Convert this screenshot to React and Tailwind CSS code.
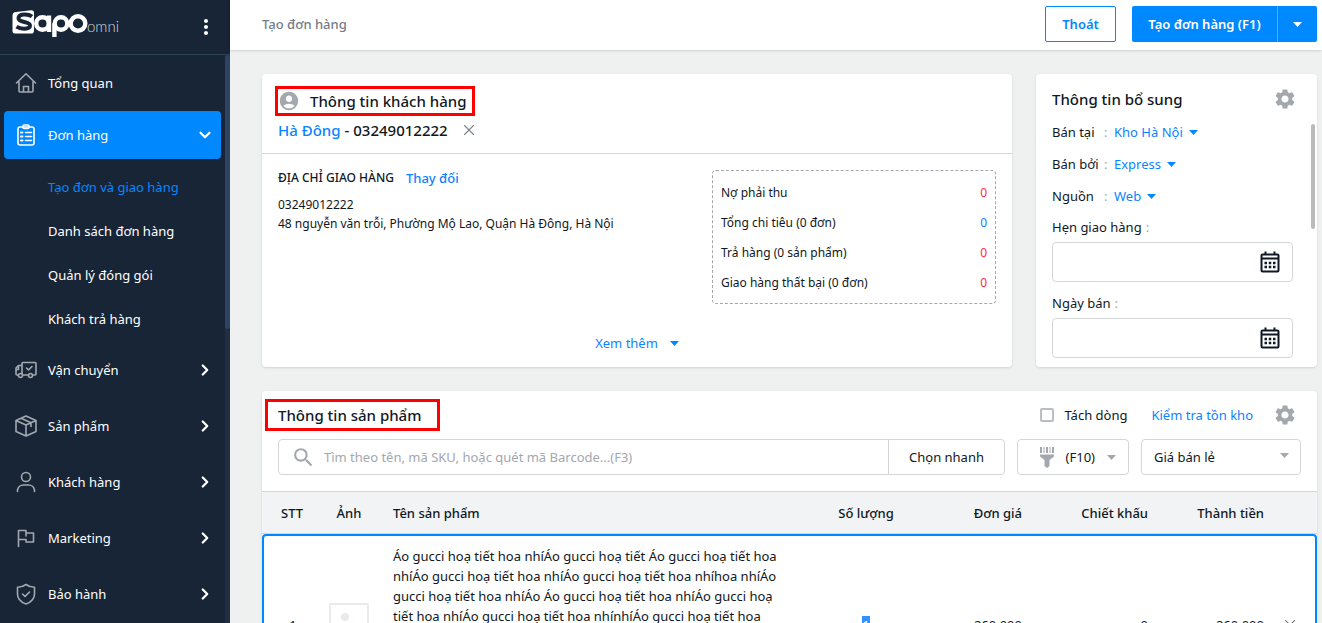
import React, { useState } from 'react';
import { ChevronDown, ChevronRight, X } from 'lucide-react';
import { MdSettings, MdAccountCircle, MdSearch, MdMoreVert } from 'react-icons/md';

const MenuIcon = ({ children }) => (
  <svg width="22" height="22" viewBox="0 0 22 22" fill="none" stroke="currentColor" strokeWidth="1.6" strokeLinejoin="round" strokeLinecap="round" className="shrink-0">
    {children}
  </svg>
);

const HomeIcon = () => (
  <MenuIcon>
    <path d="M1.500 11L11 1.800 20.500 11M4 9.500V19a1 1 0 0 0 1 1h12a1 1 0 0 0 1-1V9.500M8.500 20v-5.500h5V20" />
  </MenuIcon>
);

const OrderIcon = () => (
  <MenuIcon>
    <rect x="3" y="3" width="16" height="18" rx="2" />
    <rect x="8" y="1" width="6" height="3.5" rx="1" />
    <path d="M10.500 8.500h6M10.500 12.500h6M10.500 16.500h6" />
    <path d="M6 8.500h1.500M6 12.500h1.500M6 16.500h1.500" strokeWidth="2" />
  </MenuIcon>
);

const TruckIcon = () => (
  <MenuIcon>
    <path d="M7 15V4.500a1 1 0 0 1 1-1h12a1 1 0 0 1 1 1V15a1 1 0 0 1-1 1h-2.500M13.500 16H8" />
    <path d="M7 6.500H3.500L1 9v6a1 1 0 0 0 1 1h1M1 10.500h2.500V7" />
    <circle cx="5.500" cy="16.500" r="2" />
    <circle cx="15.500" cy="16.500" r="2" />
    <path d="M11.500 9l2 2 3.500-3.500" />
  </MenuIcon>
);

const BoxIcon = () => (
  <MenuIcon>
    <path d="M11 1l10 4.500v11L11 21 1 16.500v-11zM1 5.500l10 4.500 10-4.500M11 10v11M6 3.300l10 4.500v3.700" />
  </MenuIcon>
);

const UserIcon = () => (
  <MenuIcon>
    <circle cx="11" cy="6" r="4.500" />
    <path d="M2.500 20.500v-1.500a6 6 0 0 1 6-5h5a6 6 0 0 1 6 5v1.500" />
  </MenuIcon>
);

const FlagIcon = () => (
  <MenuIcon>
    <path d="M3.500 19.500v-16h7.500v2.500h7.500v9H11v-2.500H3.500M11 6v3" />
  </MenuIcon>
);

const ShieldIcon = () => (
  <MenuIcon>
    <path d="M11 1.500c2.500 1.800 5.500 2.700 8.500 2.800V11c0 5-3.500 8.200-8.500 10-5-1.800-8.500-5-8.500-10V4.300C5.500 4.200 8.500 3.300 11 1.500z" />
    <path d="M7.500 11l2.500 2.500 4.500-4.500" />
  </MenuIcon>
);

const CalendarIcon = () => (
  <svg width="20" height="22" viewBox="0 0 20 22" fill="none" stroke="currentColor">
    <rect x="1.500" y="3.500" width="17" height="17" rx="1" strokeWidth="2" />
    <path d="M5.500 0.500v3M14.500 0.500v3M1 7.500h18" strokeWidth="2" />
    <path d="M4.500 12h11M4.500 16h11" strokeWidth="2.500" strokeDasharray="2.500 1.750" />
  </svg>
);

const BarcodeIcon = () => (
  <svg width="14" height="21" viewBox="0 0 14 21" fill="currentColor">
    <path d="M0 0h2v6H0zM3.500 0h1v6h-1zM6 0h2v6H6zM9.500 0h1v6h-1zM12 0h2v6h-2zM0 7.500h14v2L9.500 13v6L7 21l-2.500-2v-6L0 9.500z" />
  </svg>
);

const Caret = ({ className = '' }) => (
  <svg width="9" height="5" viewBox="0 0 9 5" fill="currentColor" className={className}>
    <path d="M0 0h9L4.500 5z" />
  </svg>
);

const Logo = () => (
  <svg width="108" height="34" viewBox="0 0 108 34" role="img" aria-label="Sapo omni">
    <path d="M4 2L19 .2a2.500 2.500 0 0 1 3 2.500V21a2.500 2.500 0 0 1-3 2.500L3 23.500a2.500 2.500 0 0 1-2.500-2.500V6A3.800 3.800 0 0 1 4 2z" fill="#fff" />
    <path d="M20 6.500C16 3.500 6.500 3.500 6.500 8.300c0 4.700 11.500 2.700 11.500 7.200 0 4.200-9.500 4-13.500 1.200" fill="none" stroke="#182537" strokeWidth="4" />
    <g fill="none" stroke="#fff" strokeWidth="4.400">
      <circle cx="30.500" cy="13.500" r="6.300" />
      <path d="M37 5.500v16.500M42.400 27V13.500" />
      <circle cx="49" cy="13.500" r="6.300" />
      <circle cx="66" cy="13.500" r="7.300" />
    </g>
    <text x="75" y="22" fill="#d5d9de" fontSize="15" fontFamily="Lato, sans-serif" fontWeight="300">omni</text>
  </svg>
);

const subItems = ['Tạo đơn và giao hàng', 'Danh sách đơn hàng', 'Quản lý đóng gói', 'Khách trả hàng'];

const menuItems = [
  { label: 'Vận chuyển', icon: TruckIcon },
  { label: 'Sản phẩm', icon: BoxIcon },
  { label: 'Khách hàng', icon: UserIcon },
  { label: 'Marketing', icon: FlagIcon },
  { label: 'Bảo hành', icon: ShieldIcon },
];

const stats = [
  { label: 'Nợ phải thu', value: '0', color: 'text-[#ff2d3d]' },
  { label: 'Tổng chi tiêu (0 đơn)', value: '0', color: 'text-[#0a84ff]' },
  { label: 'Trả hàng (0 sản phẩm)', value: '0', color: 'text-[#ff2d3d]' },
  { label: 'Giao hàng thất bại (0 đơn)', value: '0', color: 'text-[#ff2d3d]' },
];

const extras = [
  { label: 'Bán tại', value: 'Kho Hà Nội' },
  { label: 'Bán bởi', value: 'Express' },
  { label: 'Nguồn', value: 'Web' },
];

const Sidebar = () => (
  <aside className="w-[230px] shrink-0 h-full overflow-hidden bg-[#182537] text-white flex flex-col">
    <div className="h-[55px] shrink-0 border-b border-[#2b4257] flex items-center justify-between px-3">
      <Logo />
      <button aria-label="Menu"><MdMoreVert size={24} /></button>
    </div>
    <div className="flex flex-1 min-h-0">
      <nav className="flex-1 px-1 pt-1">
        <a href="#" className="h-12 px-[11px] flex items-center gap-[11px]">
          <span className="text-[#a3a8af]"><HomeIcon /></span>
          Tổng quan
        </a>
        <a href="#" className="h-12 mt-1 px-[11px] flex items-center gap-[11px] rounded bg-[#0088ff]">
          <OrderIcon />
          <span className="flex-1">Đơn hàng</span>
          <ChevronDown size={18} strokeWidth={3} className="-mr-1" />
        </a>
        <ul className="pt-1.5 pb-[5px]">
          {subItems.map((item, i) => (
            <li key={item}>
              <a href="#" className={`h-11 pl-11 flex items-center ${i === 0 ? 'text-[#0088ff]' : ''}`}>{item}</a>
            </li>
          ))}
        </ul>
        <div className="flex flex-col gap-2">
          {menuItems.map(({ label, icon: Icon }) => (
            <a key={label} href="#" className="h-12 px-[11px] flex items-center gap-[11px]">
              <span className="text-[#a3a8af]"><Icon /></span>
              <span className="flex-1">{label}</span>
              <ChevronRight size={18} strokeWidth={3} className="-mr-1" />
            </a>
          ))}
        </div>
      </nav>
      <div className="w-[5px] bg-[#212e40]">
        <div className="h-[274px] rounded-full bg-[#2d4364]"></div>
      </div>
    </div>
  </aside>
);

const CustomerCard = () => (
  <section className="flex-1 min-w-0 bg-white rounded shadow-sm flex flex-col">
    <div className="pt-3 pb-[11px] px-[13px] border-b border-[#d3d5d7]">
      <h2 className="inline-flex items-center gap-2.5 h-[30px] pr-1.5 border-3 border-[#ff0000] text-[15px] font-medium">
        <MdAccountCircle size={22} className="text-[#a3a8af]" />
        Thông tin khách hàng
      </h2>
      <div className="flex items-center pl-[3px] pt-px h-[25px] text-[15px] font-medium">
        <a href="#" className="text-[#0a84ff] mr-1">Hà Đông</a>
        - 03249012222
        <button aria-label="Xóa khách hàng" className="ml-3 text-[#7d838b]"><X size={18} strokeWidth={1.5} /></button>
      </div>
    </div>
    <div className="flex justify-between px-4 pt-4">
      <div>
        <div className="flex gap-3 leading-4 font-medium">
          <span className="text-xs leading-4">ĐỊA CHỈ GIAO HÀNG</span>
          <button className="text-[#0a84ff]">Thay đổi</button>
        </div>
        <p className="mt-[9px] text-xs leading-[19px]">03249012222<br />48 nguyễn văn trỗi, Phường Mộ Lao, Quận Hà Đông, Hà Nội</p>
      </div>
      <dl className="w-[284px] pt-[7px] pb-[5px] px-2 border border-dashed border-[#a3a8af] rounded text-xs">
        {stats.map((s) => (
          <div key={s.label} className="h-[30px] flex items-center justify-between">
            <dt>{s.label}</dt>
            <dd className={s.color}>{s.value}</dd>
          </div>
        ))}
      </dl>
    </div>
    <button className="self-center mt-auto mb-[14px] flex items-center gap-3 text-[#0a84ff]">
      Xem thêm
      <Caret className="text-[#0088ff]" />
    </button>
  </section>
);

const DateField = ({ id, label }) => (
  <div>
    <label htmlFor={id} className="flex h-[30px] items-center gap-1">{label}<span className="text-[#a3a8af]">:</span></label>
    <div className="h-10 mb-[6px] flex items-center pr-3 border border-[#d3d5d7] rounded">
      <input id={id} type="text" className="flex-1 min-w-0 h-full px-3 outline-none" />
      <CalendarIcon />
    </div>
  </div>
);

const ExtraCard = () => (
  <section className="w-[281px] shrink-0 bg-white rounded shadow-sm pt-2 pb-[3px] pl-4 flex flex-col">
    <div className="h-[34px] pr-[20px] flex items-center justify-between">
      <h2 className="text-[15px] font-medium">Thông tin bổ sung</h2>
      <button aria-label="Cài đặt" className="text-[#a3a8af]"><MdSettings size={24} /></button>
    </div>
    <div className="flex">
      <div className="flex-1 min-w-0">
        {extras.map((e) => (
          <div key={e.label} className="h-8 flex items-center">
            <span className="w-[52px]">{e.label}</span>
            <span className="w-[10px] text-[#a3a8af]">:</span>
            <button className="flex items-center gap-1.5 text-[#0a84ff]">
              {e.value}
              <Caret className="text-[#0088ff]" />
            </button>
          </div>
        ))}
        <DateField id="delivery" label="Hẹn giao hàng" />
        <DateField id="saleDate" label="Ngày bán" />
      </div>
      <div className="w-6 shrink-0 flex justify-end pr-[2px] pt-2">
        <div className="w-1 h-[105px] rounded-full bg-[#bababa]"></div>
      </div>
    </div>
  </section>
);

const ProductCard = () => {
  const [split, setSplit] = useState(false);

  return (
    <section className="mt-6 bg-white rounded shadow-sm">
      <div className="pt-2 pl-[3px] pr-5 flex items-center">
        <h2 className="h-8 flex items-center pl-[10px] pr-4 border-3 border-[#ff0000] text-[15px] font-medium">Thông tin sản phẩm</h2>
        <label className="ml-auto flex items-center gap-2.5">
          <input
            type="checkbox"
            checked={split}
            onChange={(e) => setSplit(e.target.checked)}
            className="appearance-none w-3.5 h-3.5 border-2 border-[#babdc1] rounded-xs bg-white checked:bg-[#0088ff]"
          />
          Tách dòng
        </label>
        <a href="#" className="ml-6 text-[#0a84ff]">Kiểm tra tồn kho</a>
        <button aria-label="Cài đặt" className="ml-5 text-[#a3a8af]"><MdSettings size={24} /></button>
      </div>
      <div className="flex gap-3 px-4 pt-2 pb-4">
        <div className="flex-1 h-9 flex border border-[#d3d5d7] rounded">
          <div className="flex-1 flex items-center pl-3 gap-2">
            <MdSearch size={25} className="text-[#a3a8af]" />
            <input
              aria-label="Tìm sản phẩm"
              placeholder="Tìm theo tên, mã SKU, hoặc quét mã Barcode...(F3)"
              className="flex-1 h-full outline-none placeholder:text-[#a3a8af]"
            />
          </div>
          <button className="w-[116px] border-l border-[#d3d5d7]">Chọn nhanh</button>
        </div>
        <button className="w-[112px] h-9 flex items-center justify-end gap-3 pr-3 border border-[#d3d5d7] rounded">
          <span className="text-[#a3a8af]"><BarcodeIcon /></span>
          (F10)
          <Caret className="text-[#a3a8af]" />
        </button>
        <div className="relative w-40 h-9">
          <select aria-label="Chính sách giá" className="appearance-none w-full h-full pl-3 pr-8 bg-white border border-[#d3d5d7] rounded outline-none">
            <option>Giá bán lẻ</option>
          </select>
          <Caret className="absolute right-3 top-[14px] text-[#a3a8af] pointer-events-none" />
        </div>
      </div>
      <table className="w-full table-fixed border-separate border-spacing-0">
        <thead>
          <tr className="h-[43px] bg-[#f2f3f5] [&>th]:border-y [&>th]:border-[#d3d5d7] [&>th]:font-medium">
            <th className="w-[60px]">STT</th>
            <th className="w-[54px]">Ảnh</th>
            <th className="pl-[17px] text-left">Tên sản phẩm</th>
            <th className="w-[120px]">Số lượng</th>
            <th className="w-[96px] text-right">Đơn giá</th>
            <th className="w-[126px] text-right">Chiết khấu</th>
            <th className="w-[116px] text-right">Thành tiền</th>
            <th className="w-[53px]"></th>
          </tr>
        </thead>
        <tbody>
          <tr className="h-[182px] [&>td]:border-y-2 [&>td]:border-[#0088ff]">
            <td className="text-center border-l-2 rounded-l">1</td>
            <td>
              <div className="w-10 h-11 mx-auto border-2 border-[#e8eaeb] rounded-xs">
                <svg viewBox="0 0 36 40" fill="#e8eaeb">
                  <circle cx="14" cy="12" r="4" />
                  <path d="M3 36l8-9 4 4 6-14 12 19z" />
                </svg>
              </div>
            </td>
            <td className="pl-[17px] pt-[10px] align-top leading-5 whitespace-nowrap">
              Áo gucci hoạ tiết hoa nhíÁo gucci hoạ tiết Áo gucci hoạ tiết hoa<br />
              nhíÁo gucci hoạ tiết hoa nhíÁo gucci hoạ tiết hoa nhíhoa nhíÁo<br />
              gucci hoạ tiết hoa nhíÁo Áo gucci hoạ tiết hoa nhíÁo gucci hoạ<br />
              tiết hoa nhíÁo gucci hoạ tiết hoa nhínhíÁo gucci hoạ tiết hoa
            </td>
            <td className="text-center"><span className="bg-[#3390ff] text-white">1</span></td>
            <td className="text-right">260.000</td>
            <td className="text-right">0</td>
            <td className="text-right">260.000</td>
            <td className="border-r-2 rounded-r">
              <button aria-label="Xóa" className="block mx-auto text-[#7d838b]"><X size={18} strokeWidth={1.5} /></button>
            </td>
          </tr>
        </tbody>
      </table>
    </section>
  );
};

const App = () => {
  return (
    <div className="h-screen overflow-hidden flex bg-[#eff1f1] text-[13px] leading-5 text-[#0f1824] font-['Segoe_UI','Noto_Sans',sans-serif]">
      <Sidebar />
      <div className="flex-1 min-w-0 flex flex-col">
        <header className="h-[50px] shrink-0 bg-white shadow flex items-center pl-8 pr-[5px] pb-0.5">
          <h1 className="flex-1 text-[#747c87] font-medium">Tạo đơn hàng</h1>
          <button className="w-[71px] h-9 border border-[#0088ff] rounded-xs text-[#0088ff] font-semibold">Thoát</button>
          <div className="ml-4 h-9 flex rounded-xs bg-[#0088ff] text-white">
            <button className="w-[145px] font-semibold">Tạo đơn hàng (F1)</button>
            <button aria-label="Thêm lựa chọn" className="w-10 flex items-center justify-center border-l border-[#4dacff]"><Caret /></button>
          </div>
        </header>
        <main className="flex-1 min-h-0 overflow-hidden pl-8 pr-[5px] pt-6">
          <div className="flex gap-6">
            <CustomerCard />
            <ExtraCard />
          </div>
          <ProductCard />
        </main>
      </div>
    </div>
  );
};

export default App;
